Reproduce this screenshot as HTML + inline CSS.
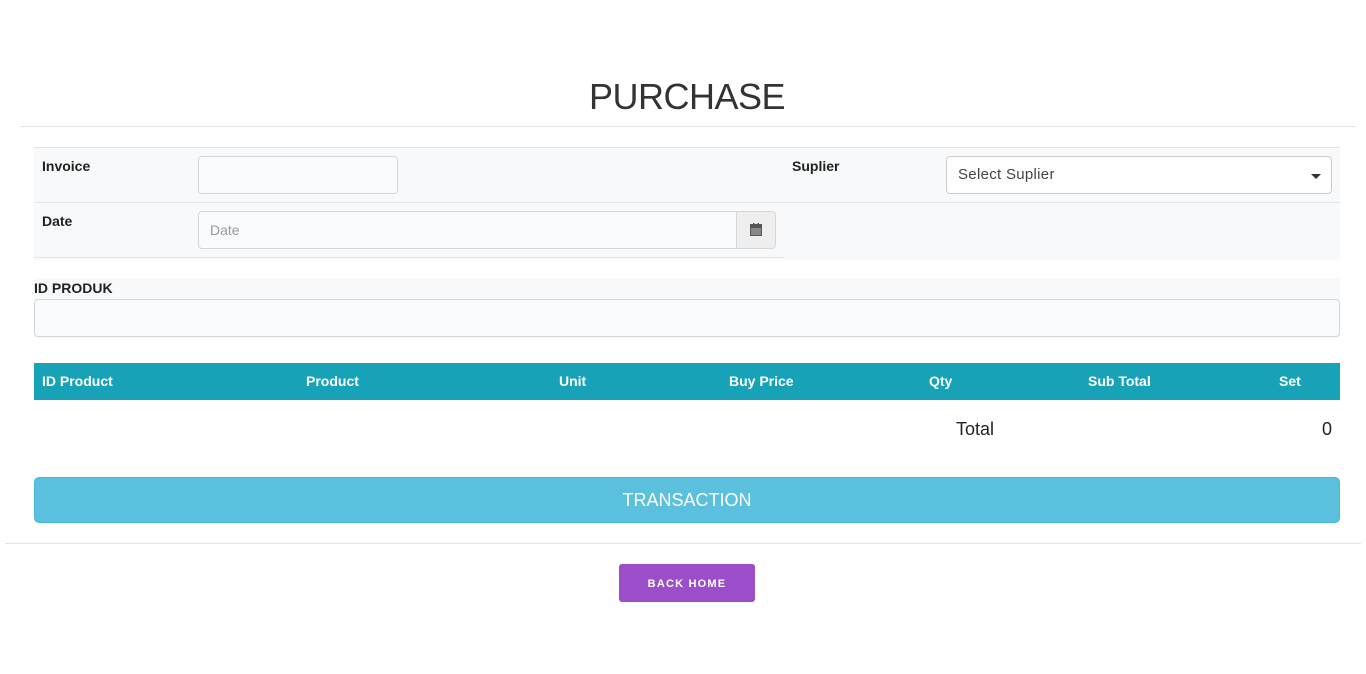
<!DOCTYPE html>
<html><head><meta charset="utf-8"><style>
*{box-sizing:border-box;margin:0;padding:0}
body{width:1366px;height:674px;background:#fff;font-family:"Liberation Sans","DejaVu Sans",sans-serif;color:#333;position:relative;overflow:hidden}
.a{position:absolute}
.lbl{font-weight:bold;font-size:14px;color:#222}
.inp{background:#fafbfc;border:1px solid #d3d6d9;border-radius:4px}
th{color:#fff;font-size:14px;font-weight:bold}
</style></head><body>
<div class="a" style="left:0;top:76px;width:1374px;text-align:center;font-size:36px;color:#333;letter-spacing:-0.5px">PURCHASE</div>
<div class="a" style="left:20px;top:126px;width:1336px;height:1px;background:#e5e5e5"></div>

<div class="a" style="left:34px;top:147px;width:1306px;height:113px;background:#f8f9fa"></div>
<div class="a" style="left:34px;top:147px;width:1306px;height:1px;background:#e2e4e6"></div>
<div class="a" style="left:34px;top:202px;width:1306px;height:1px;background:#e2e4e6"></div>
<div class="a" style="left:34px;top:257px;width:750px;height:1px;background:#e2e4e6"></div>

<div class="a lbl" style="left:42px;top:158px">Invoice</div>
<div class="a inp" style="left:198px;top:156px;width:200px;height:38px"></div>
<div class="a lbl" style="left:792px;top:158px">Suplier</div>
<div class="a" style="left:946px;top:156px;width:386px;height:38px;background:#fff;border:1px solid #ccc;border-radius:4px;font-size:15px;color:#444;padding:9px 11px;letter-spacing:0.3px">Select Suplier
<div class="a" style="right:10px;top:17px;width:0;height:0;border-left:5px solid transparent;border-right:5px solid transparent;border-top:5px solid #333"></div></div>

<div class="a lbl" style="left:42px;top:213px">Date</div>
<div class="a inp" style="left:198px;top:211px;width:578px;height:38px;font-size:14px;color:#999;padding:10px 11px">Date</div>
<div class="a" style="left:736px;top:212px;width:39px;height:36px;background:#eeeeee;border-left:1px solid #d3d6d9;border-radius:0 4px 4px 0">
<svg class="a" style="left:13px;top:11px" width="12" height="13" viewBox="0 0 12 13"><rect x="0" y="1" width="12" height="12" fill="#555"/><rect x="1" y="5" width="10" height="7" fill="#888"/><rect x="3" y="0" width="1.5" height="3" fill="#555"/><rect x="7.5" y="0" width="1.5" height="3" fill="#555"/></svg></div>

<div class="a" style="left:34px;top:278px;width:1306px;height:60px;background:#f8f9fa"></div>
<div class="a lbl" style="left:34px;top:280px">ID PRODUK</div>
<div class="a inp" style="left:34px;top:299px;width:1306px;height:38px"></div>

<div class="a" style="left:34px;top:363px;width:1306px;height:37px;background:#17a2b8"></div>
<table class="a" style="left:34px;top:363px;width:1306px;height:37px;border-collapse:collapse"><tr>
<th class="a" style="left:8px;top:10px">ID Product</th>
<th class="a" style="left:272px;top:10px">Product</th>
<th class="a" style="left:525px;top:10px">Unit</th>
<th class="a" style="left:695px;top:10px">Buy Price</th>
<th class="a" style="left:895px;top:10px">Qty</th>
<th class="a" style="left:1054px;top:10px">Sub Total</th>
<th class="a" style="left:1245px;top:10px">Set</th>
</tr></table>
<div class="a" style="left:956px;top:419px;font-size:18px;color:#222">Total</div>
<div class="a" style="left:1322px;top:419px;font-size:18px;color:#222">0</div>

<div class="a" style="left:34px;top:477px;width:1306px;height:46px;background:#5bc0de;border:1px solid #46b8da;border-radius:5px;color:#fff;font-size:18px;text-align:center;line-height:44px">TRANSACTION</div>
<div class="a" style="left:5px;top:543px;width:1356px;height:1px;background:#e5e5e5"></div>
<div class="a" style="left:619px;top:564px;width:136px;height:38px;background:#9b4dca;border-radius:3px;color:#fff;font-size:11px;font-weight:bold;letter-spacing:1.2px;text-align:center;line-height:40px">BACK HOME</div>
</body></html>
